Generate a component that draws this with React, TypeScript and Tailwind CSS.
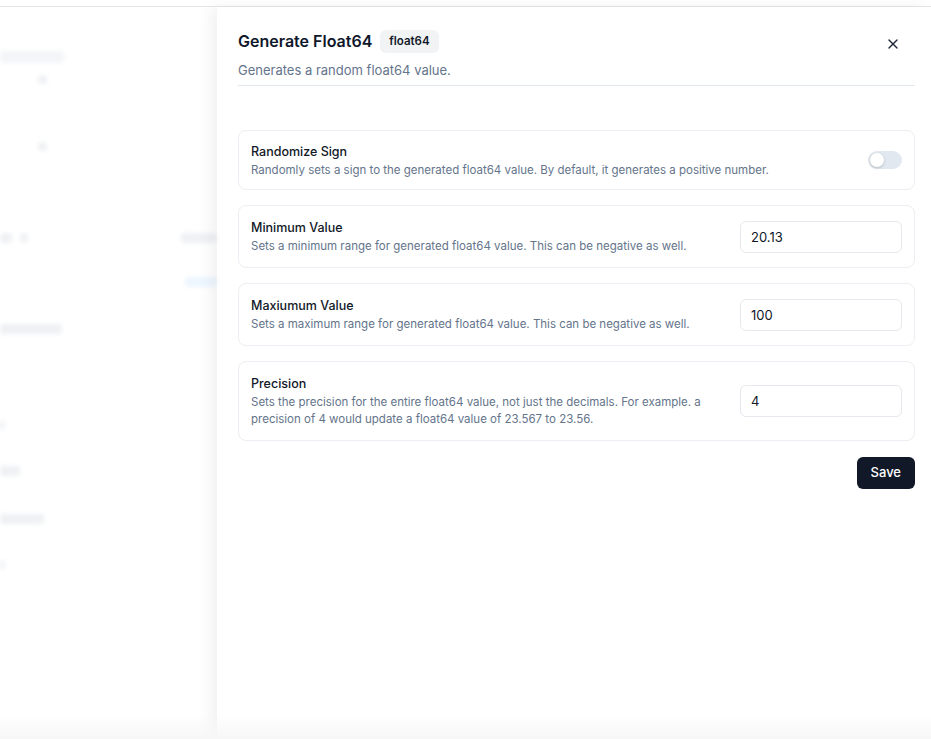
import { X } from "lucide-react";
import { useState } from "react";

type Field = {
  title: string;
  desc: string;
  value: string;
};

const fields: Field[] = [
  {
    title: "Minimum Value",
    desc: "Sets a minimum range for generated float64 value. This can be negative as well.",
    value: "20.13",
  },
  {
    title: "Maxiumum Value",
    desc: "Sets a maximum range for generated float64 value. This can be negative as well.",
    value: "100",
  },
  {
    title: "Precision",
    desc: "Sets the precision for the entire float64 value, not just the decimals. For example. a precision of 4 would update a float64 value of 23.567 to 23.56.",
    value: "4",
  },
];

function Backdrop() {
  // faded, blurred page behind the sheet
  return (
    <div className="w-[217px] shrink-0 overflow-hidden opacity-[0.1] blur-[2px]">
      <div className="mt-[44px] h-[12px] w-[64px] rounded bg-slate-400" />
      <div className="ml-[38px] mt-[12px] h-[9px] w-[9px] rounded-sm bg-slate-500" />
      <div className="ml-[38px] mt-[58px] h-[9px] w-[9px] rounded-sm bg-slate-500" />
      <div className="mt-[82px] flex items-center justify-between">
        <div className="flex gap-2">
          <div className="h-[10px] w-[12px] rounded-sm bg-slate-500" />
          <div className="h-[10px] w-[8px] rounded-sm bg-slate-500" />
        </div>
        <div className="h-[10px] w-[36px] rounded-sm bg-slate-500" />
      </div>
      <div className="mt-[34px] flex justify-end">
        <div className="h-[10px] w-[32px] rounded-sm bg-blue-400" />
      </div>
      <div className="mt-[37px] h-[10px] w-[62px] rounded-sm bg-slate-500" />
      <div className="mt-[86px] h-[10px] w-[4px] rounded-sm bg-slate-500" />
      <div className="mt-[36px] h-[10px] w-[20px] rounded-sm bg-slate-500" />
      <div className="mt-[38px] h-[10px] w-[44px] rounded-sm bg-slate-500" />
      <div className="mt-[36px] h-[10px] w-[4px] rounded-sm bg-slate-500" />
    </div>
  );
}

export default function App() {
  const [sign, setSign] = useState(false);
  return (
    <div className="flex h-[739px] w-full flex-col overflow-hidden bg-white font-['Inter',sans-serif] text-slate-900">
      <div className="h-[7px] shrink-0 border-b border-[#e4e6ea]" />
      <div className="relative flex min-h-0 flex-1">
        <Backdrop />

        {/* Sheet */}
        <div className="flex-1 bg-white pl-[21px] pr-4 shadow-[-6px_0_14px_rgba(0,0,0,0.06)]">
          <div className="flex items-start justify-between border-b border-[#e2e8f0] pb-[5px] pt-[20px]">
            <div>
              <div className="flex items-center gap-2">
                <h2 className="text-[16px] font-semibold leading-7 text-[#0f172a]">
                  Generate Float64
                </h2>
                <span className="rounded-md bg-[#f1f3f5] px-[9px] py-[3px] text-[11.5px] font-semibold leading-[17px] text-[#111827]">
                  float64
                </span>
              </div>
              <p className="mt-[5px] text-[13px] leading-5 text-[#64748b]">
                Generates a random float64 value.
              </p>
            </div>
            <button className="mr-[14px] mt-[9px] text-[#1f2937]" aria-label="Close">
              <X className="h-4 w-4" strokeWidth={2} />
            </button>
          </div>

          <div className="mt-[44px] flex flex-col gap-[15px]">
            <div className="flex items-center gap-4 rounded-lg border border-[#ebeef2] px-3 py-[11px]">
              <div className="flex-1">
                <div className="text-[12.5px] font-medium leading-5 text-[#111827]">
                  Randomize Sign
                </div>
                <div className="text-[11.5px] leading-4 text-[#64748b]">
                  Randomly sets a sign to the generated float64 value. By default, it generates a positive number.
                </div>
              </div>
              <button
                onClick={() => setSign(!sign)}
                className={`flex h-[18px] w-[34px] items-center rounded-full p-[2px] ${
                  sign ? "bg-[#0f172a]" : "bg-[#e2e8f0]"
                }`}
                aria-label="Randomize Sign"
              >
                <span
                  className={`h-[14px] w-[14px] rounded-full bg-white shadow-[0_1px_3px_rgba(0,0,0,0.2)] ${
                    sign ? "translate-x-4" : "translate-x-0"
                  }`}
                />
              </button>
            </div>

            {fields.map((f) => (
              <div
                key={f.title}
                className="flex items-center gap-4 rounded-lg border border-[#ebeef2] px-3 py-3"
              >
                <div className="flex-1">
                  <div className="text-[12.5px] font-medium leading-5 text-[#111827]">
                    {f.title}
                  </div>
                  <div className="text-[11.5px] leading-[17px] text-[#64748b]">
                    {f.desc}
                  </div>
                </div>
                <input
                  defaultValue={f.value}
                  className="h-8 w-[162px] rounded-md border border-[#e5e8ec] px-2.5 text-[13px] text-[#111827] outline-none"
                />
              </div>
            ))}
          </div>

          <div className="mt-4 flex justify-end">
            <button className="h-8 rounded-md bg-[#111827] px-[14px] text-[13px] font-medium text-white">
              Save
            </button>
          </div>
        </div>

        <div className="pointer-events-none absolute inset-x-0 bottom-0 h-6 bg-gradient-to-t from-[#f7f7f7] to-transparent" />
      </div>
    </div>
  );
}
